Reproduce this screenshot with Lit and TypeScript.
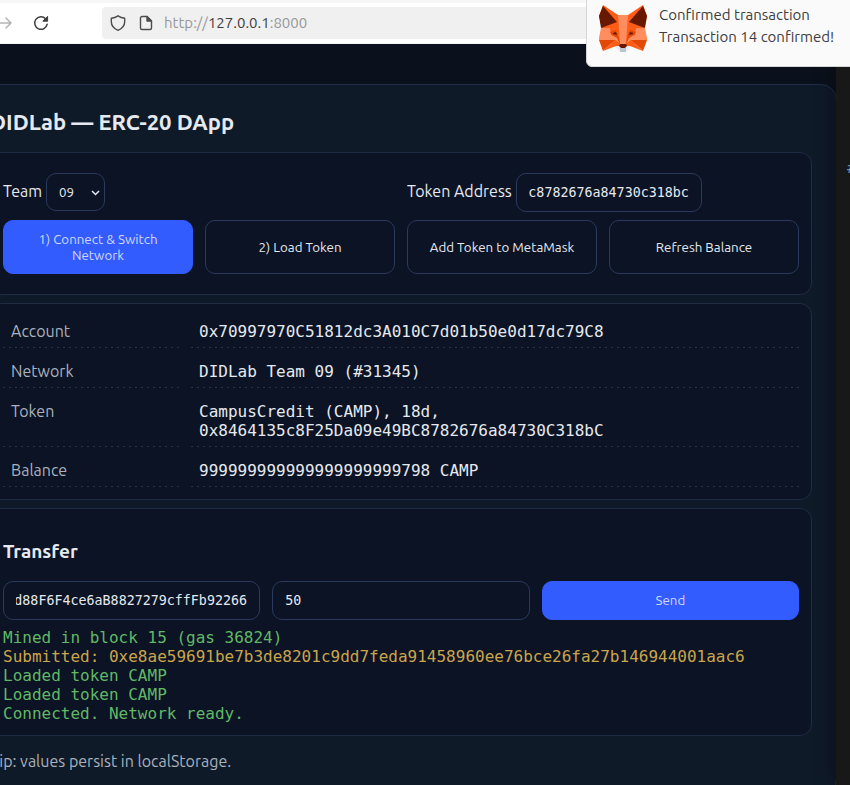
import { LitElement, html, css } from "lit";
import { customElement, state } from "lit/decorators.js";

type LogEntry = { kind: "ok" | "warn"; text: string };

@customElement("metamask-fox")
class MetamaskFox extends LitElement {
  static styles = css`
    :host { display: block; width: 50px; height: 50px; flex: none; }
    svg { display: block; width: 100%; height: 100%; }
  `;
  render() {
    return html`<svg viewBox="0 0 50 50" aria-hidden="true">
      <path fill="#e7ebf6" d="M15 40H35L29 47H21Z"/>
      <path fill="#ff5c16" d="M5 1 20 11H30L45 1 49 12 46 24 35 42H15L4 24 1 12Z"/>
      <path fill="#661800" d="M5 2 1 12 3 24 19 18Z M45 2 49 12 47 24 31 18Z"/>
      <path fill="#ff8d5d" d="M20 11H30L28 40H22Z"/>
      <path fill="#ff8d5d" d="M3 24 12 24 13 31 20 33 21 39 17 36H1V34Z M47 24 38 24 37 31 30 33 29 39 33 36H49V34Z"/>
      <path fill="#e34807" d="M1 36H17L5 47Z M49 36H33L45 47Z"/>
      <path fill="#ff5c16" d="M17 36 18 42 5 47Z M33 36 32 42 45 47Z M17 36 22 41 18 42Z M33 36 28 41 32 42Z"/>
      <path fill="#e34807" d="M12 28 18 26 20 31 22 40 19 34 14 31Z M38 28 32 26 30 31 28 40 31 34 36 31Z"/>
      <path fill="#661800" d="M15 29 18 28 19 31 15 30Z M35 29 32 28 31 31 35 30Z M22 40H28L29 42 27 44H23L21 42Z"/>
      <path fill="#c0c4cd" d="M22 44H28V48H22Z"/>
    </svg>`;
  }
}

@customElement("browser-toolbar")
class BrowserToolbar extends LitElement {
  static styles = css`
    :host { display: block; background: #fff; border-top: 3px solid #f7f7f8; font-family: Ubuntu, "Noto Sans", sans-serif; }
    .bar { display: flex; align-items: center; height: 40px; border-bottom: 1px solid #f4f4f5; }
    button { display: block; border: 0; padding: 0; background: none; width: 16px; height: 16px; }
    svg { display: block; width: 16px; height: 16px; fill: none; flex: none; }
    .forward { margin: 0 21px 0 -4px; }
    .url { flex: 1; display: flex; align-items: center; gap: 12px; height: 32px; margin-left: 53px; padding: 0 8px; border-radius: 4px; background: #f0f0f0; box-sizing: border-box; }
    .address { margin-left: -2px; font-size: 15px; line-height: 20px; color: #989898; }
    .address b { font-weight: 400; color: #3d3d3d; }
  `;
  render() {
    return html`<div class="bar">
      <button class="forward" aria-label="Forward"><svg viewBox="0 0 16 16" stroke="#b4b4b4" stroke-width="1.5" stroke-linecap="round" stroke-linejoin="round"><path d="M0 8H15M10 3 15 8 10 13"/></svg></button>
      <button aria-label="Reload"><svg viewBox="0 0 16 16" stroke="#3f3f3f" stroke-width="1.5"><path stroke-linecap="round" d="M14.2 9.2A6.3 6.3 0 1 1 12.6 3.7"/><path d="M14.6 1.4V6.2H9.8Z" fill="#3f3f3f" stroke-linejoin="round" stroke-width="1"/></svg></button>
      <div class="url">
        <svg viewBox="0 0 16 16" stroke="#4c4c4c" stroke-width="1.4" stroke-linejoin="round"><path d="M8 .8Q11 2.800 14.700 3.300V6.500C14.700 10.500 12.500 13.500 8 15.300 3.500 13.500 1.300 10.500 1.300 6.500V3.300Q5 2.800 8 .8Z"/></svg>
        <svg viewBox="0 0 16 16" stroke="#4c4c4c" stroke-width="1.4" stroke-linejoin="round"><path d="M4 1.500H9L13.500 6V13A1.500 1.500 0 0 1 12 14.500H4A1.500 1.500 0 0 1 2.500 13V3A1.500 1.500 0 0 1 4 1.500Z"/><path d="M9 1.500V6H13.500Z" fill="#4c4c4c"/></svg>
        <span class="address">http://<b>127.0.0.1</b>:8000</span>
      </div>
    </div>`;
  }
}

@customElement("app-root")
class AppRoot extends LitElement {
  @state() private rows = [
    { label: "Account", value: "0x70997970C51812dc3A010C7d01b50e0d17dc79C8" },
    { label: "Network", value: "DIDLab Team 09 (#31345)" },
    { label: "Token", value: "CampusCredit (CAMP), 18d, 0x8464135c8F25Da09e49BC8782676a84730C318bC" },
    { label: "Balance", value: "999999999999999999999798 CAMP" },
  ];

  @state() private log: LogEntry[] = [
    { kind: "ok", text: "Mined in block 15 (gas 36824)" },
    { kind: "warn", text: "Submitted: 0xe8ae59691be7b3de8201c9dd7feda91458960ee76bce26fa27b146944001aac6" },
    { kind: "ok", text: "Loaded token CAMP" },
    { kind: "ok", text: "Loaded token CAMP" },
    { kind: "ok", text: "Connected. Network ready." },
  ];

  static styles = css`
    :host { display: flex; position: relative; overflow: hidden; height: 100vh; background: #181818; color: #e6e9ef; font: 16px/18px Ubuntu, "Noto Sans", sans-serif; }
    * { box-sizing: border-box; }
    .window { flex: 1; min-width: 0; background: #0b111c; overflow: hidden; }
    .editor { position: relative; flex: none; width: 14px; padding: 159px 0 0 11px; background: #181818; color: #6d8fac; font-family: "DejaVu Sans Mono", monospace; box-shadow: 0 0 20px rgba(0, 0, 0, 0.5); }
    .shell { margin: 40px -1px 0 -35px; padding: 0 24px 24px; border: 1px solid #1f2d49; border-radius: 16px; background: #0f1a29; }
    h1 { margin: 23px 0 17px; font-size: 22px; line-height: 27px; font-weight: 600; }
    h2 { margin: 20px 0; font-size: 19px; line-height: 20px; font-weight: 600; }
    .card { border: 1px solid #1f2c45; border-radius: 12px; background: #0b1324; padding: 12px; margin-bottom: 8px; }
    .setup { padding: 20px 12px; }
    .fields { display: grid; grid-template-columns: 1fr 1fr; gap: 12px; margin-bottom: 8px; }
    .field { display: flex; align-items: flex-start; gap: 4px; line-height: 36px; white-space: nowrap; }
    .actions { display: grid; grid-template-columns: repeat(4, 1fr); gap: 12px; }
    .transfer { display: grid; grid-template-columns: repeat(3, 1fr); gap: 12px; }
    input, button, select { border: 1px solid #2a3a5e; border-radius: 10px; background: #0b1324; color: #e6e9ef; margin: 0; }
    input { font-family: "DejaVu Sans Mono", monospace; padding: 10px 12px; height: 39px; width: 100%; min-width: 0; }
    .field input { width: 186px; }
    button { font-family: inherit; line-height: 16px; padding: 10px 16px; min-height: 39px; }
    .actions button { height: 54px; padding: 11px 16px 9px; }
    button.primary { background: #335cff; border-color: #335cff; color: #d0d8fa; }
    .pick { position: relative; display: block; }
    select { display: block; appearance: none; font-family: inherit; height: 38px; width: 59px; padding: 0 12px; }
    .pick svg { position: absolute; right: 5px; top: 15px; width: 9px; height: 9px; fill: none; stroke: #e6e9ef; stroke-width: 1.5; pointer-events: none; }
    dl { margin: 0; display: grid; grid-template-columns: 180px 1fr; gap: 8px; }
    dt, dd { margin: 0; padding: 6px 8px 7px; line-height: 19px; background: repeating-linear-gradient(90deg, #24324d 0 2px, transparent 2px 6px) left bottom / 100% 1px no-repeat; }
    dt { color: #a9b1bd; }
    dd { font-family: "DejaVu Sans Mono", monospace; }
    .log { margin-top: 8px; font: 16px/19px "DejaVu Sans Mono", monospace; }
    .ok { color: #62b866; }
    .warn { color: #caa54b; }
    .tip { margin: 16px 0 0; color: #a9b1bd; line-height: 18px; }
    .toast { position: absolute; top: -6px; right: -6px; width: 270px; height: 73px; padding: 9px 11px; display: flex; gap: 11px; border: 1px solid #d5d5d5; border-radius: 6px; background: #fafafa; color: #3d3d3d; font-size: 15px; line-height: 22px; white-space: nowrap; }
  `;

  firstUpdated() {
    // Long addresses show their last characters, as after typing or pasting.
    this.renderRoot.querySelectorAll("input").forEach((field) => {
      field.scrollLeft = field.scrollWidth;
    });
  }

  render() {
    return html`
      <div class="window">
        <browser-toolbar></browser-toolbar>
        <main class="shell">
          <h1>DIDLab — ERC-20 DApp</h1>
          <section class="card setup">
            <div class="fields">
              <div class="field"><label for="team">Team</label>
                <span class="pick"><select id="team"><option>09</option></select><svg viewBox="0 0 9 9"><path d="M1 3 4.500 6.500 8 3"/></svg></span></div>
              <div class="field"><label for="token">Token Address</label><input id="token" .value=${"0x8464135c8f25da09e49bc8782676a84730c318bc"} /></div>
            </div>
            <div class="actions">
              <button class="primary">1) Connect &amp; Switch Network</button>
              <button>2) Load Token</button>
              <button>Add Token to MetaMask</button>
              <button>Refresh Balance</button>
            </div>
          </section>
          <section class="card">
            <dl>${this.rows.map((r) => html`<dt>${r.label}</dt><dd>${r.value}</dd>`)}</dl>
          </section>
          <section class="card">
            <h2>Transfer</h2>
            <div class="transfer">
              <input aria-label="Recipient" .value=${"0xf39Fd6e51aad88F6F4ce6aB8827279cffFb92266"} />
              <input aria-label="Amount" .value=${"50"} />
              <button class="primary">Send</button>
            </div>
            <div class="log">${this.log.map((l) => html`<div class=${l.kind}>${l.text}</div>`)}</div>
          </section>
          <p class="tip">Tip: values persist in localStorage.</p>
        </main>
      </div>
      <div class="editor" aria-hidden="true">#</div>
      <aside class="toast" role="status">
        <metamask-fox></metamask-fox>
        <div><div>Confirmed transaction</div><div>Transaction 14 confirmed!</div></div>
      </aside>
    `;
  }
}
